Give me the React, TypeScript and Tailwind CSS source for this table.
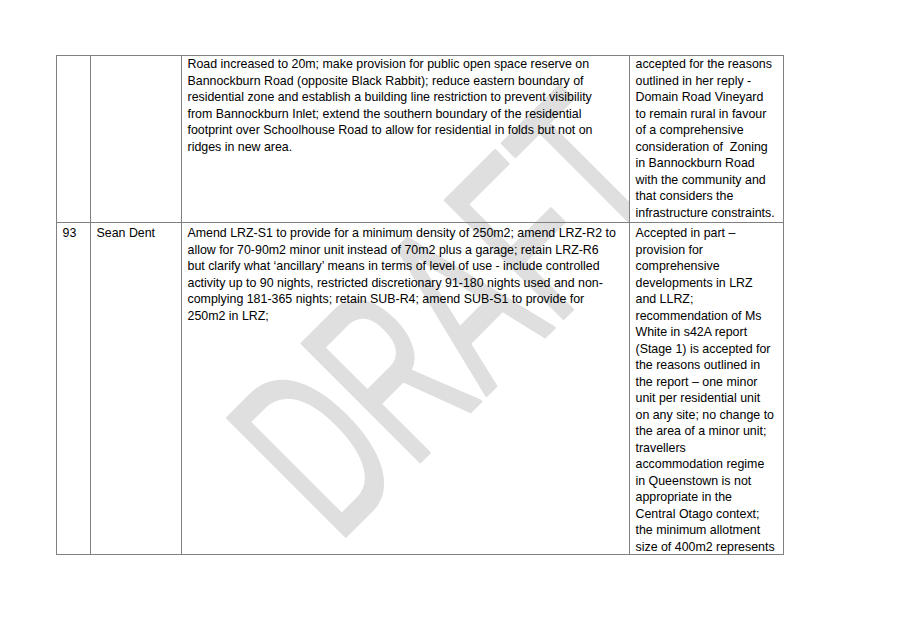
// Submission table page with a diagonal DRAFT watermark behind the text.

const row1Submission = [
  'Road increased to 20m; make provision for public open space reserve on',
  'Bannockburn Road (opposite Black Rabbit); reduce eastern boundary of',
  'residential zone and establish a building line restriction to prevent visibility',
  'from Bannockburn Inlet; extend the southern boundary of the residential',
  'footprint over Schoolhouse Road to allow for residential in folds but not on',
  'ridges in new area.',
];

const row1Decision = [
  'accepted for the reasons',
  'outlined in her reply -',
  'Domain Road Vineyard',
  'to remain rural in favour',
  'of a comprehensive',
  'consideration of\u00a0 Zoning',
  'in Bannockburn Road',
  'with the community and',
  'that considers the',
  'infrastructure constraints.',
];

const row2Submission = [
  'Amend LRZ-S1 to provide for a minimum density of 250m2; amend LRZ-R2 to',
  'allow for 70-90m2 minor unit instead of 70m2 plus a garage; retain LRZ-R6',
  'but clarify what \u2018ancillary\u2019 means in terms of level of use - include controlled',
  'activity up to 90 nights, restricted discretionary 91-180 nights used and non-',
  'complying 181-365 nights; retain SUB-R4; amend SUB-S1 to provide for',
  '250m2 in LRZ;',
];

const row2Decision = [
  'Accepted in part \u2013',
  'provision for',
  'comprehensive',
  'developments in LRZ',
  'and LLRZ;',
  'recommendation of Ms',
  'White in s42A report',
  '(Stage 1) is accepted for',
  'the reasons outlined in',
  'the report \u2013 one minor',
  'unit per residential unit',
  'on any site; no change to',
  'the area of a minor unit;',
  'travellers',
  'accommodation regime',
  'in Queenstown is not',
  'appropriate in the',
  'Central Otago context;',
  'the minimum allotment',
  'size of 400m2 represents',
];

function Lines({ lines }: { lines: string[] }) {
  return (
    <>
      {lines.map((l, i) => (
        <div key={i} className="whitespace-nowrap">
          {l}
        </div>
      ))}
    </>
  );
}

// watermark sits behind the table; the last column is shaded white and hides it
function Watermark() {
  return (
    <svg className="absolute inset-0 pointer-events-none" width={907} height={626} aria-hidden>
      <g transform="translate(337 545) rotate(-45) scale(0.6 1)">
        <text
          x={0}
          y={0}
          fontFamily="'Liberation Sans', Arial, sans-serif"
          fontSize={243}
          fill="#dfdfdf"
          stroke="#dfdfdf"
          strokeWidth={3}
          strokeLinejoin="round"
        >
          DRAFT
        </text>
      </g>
    </svg>
  );
}

export default function App() {
  const cell = 'border-r border-b border-[#808080] px-[5.5px]';
  return (
    <div className="relative w-[907px] h-[626px] bg-white overflow-hidden font-['Liberation_Sans',Arial,sans-serif] text-[12.4px] leading-[16.5px] text-black">
      <Watermark />
      <div className="relative pt-[55px] pl-[56px]">
        <div className="grid grid-cols-[34px_91px_448px_154px] w-[728px] border-l border-t border-[#808080]">
          {/* continued row from the previous page */}
          <div className={`${cell} h-[167px]`} />
          <div className={`${cell} h-[167px]`} />
          <div className={`${cell} h-[167px]`}>
            <Lines lines={row1Submission} />
          </div>
          <div className={`${cell} h-[167px] bg-white`}>
            <Lines lines={row1Decision} />
          </div>

          <div className={`${cell} h-[332px] pt-[2px]`}>93</div>
          <div className={`${cell} h-[332px] pt-[2px]`}>Sean Dent</div>
          <div className={`${cell} h-[332px] pt-[2px]`}>
            <Lines lines={row2Submission} />
          </div>
          <div className={`${cell} h-[332px] pt-[2px] bg-white`}>
            <Lines lines={row2Decision} />
          </div>
        </div>
      </div>
    </div>
  );
}
